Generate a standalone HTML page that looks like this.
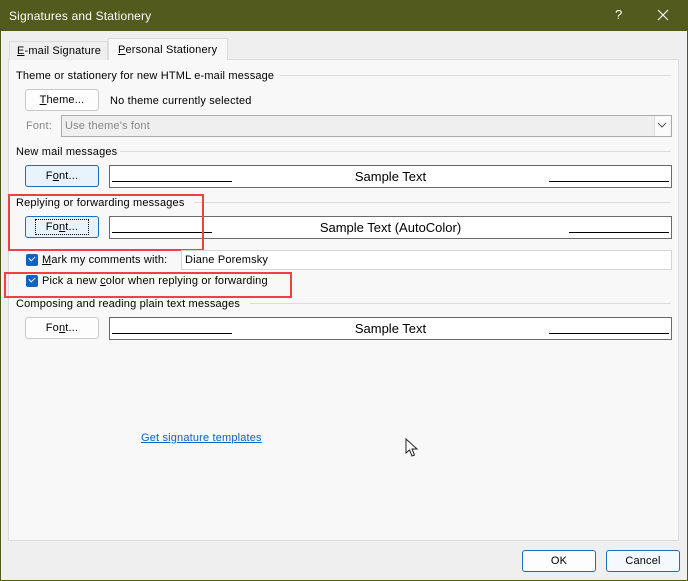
<!DOCTYPE html>
<html><head><meta charset="utf-8"><style>
*{box-sizing:border-box;margin:0;padding:0}
body{width:688px;height:581px;background:#efefef;font-family:"Liberation Sans",sans-serif;font-size:11px;color:#000;position:relative;overflow:hidden}
.a{position:absolute}
.t{position:absolute;white-space:nowrap;line-height:14px;letter-spacing:0.17px}
.btn{position:absolute;width:74px;height:22px;border:1px solid #c8c8c8;border-radius:3px;background:#fdfdfd;text-align:center;line-height:20px;font-size:11px;letter-spacing:0.17px}
.bl{border-color:#1a6fbf;background:#e8f2fb}
.samp{position:absolute;left:109px;width:563px;height:23px;background:#fff;border:1px solid #6a6a6a}
.samp .u{position:absolute;bottom:5px;height:1px;background:#000}
.samp span{position:absolute;left:0;right:0;text-align:center;top:3px;font-size:13px}
.hl{position:absolute;height:1px;background:#dcdcdc;right:17px}
.cb{position:absolute;width:12px;height:12px;background:#0f62c0;border-radius:2px}
.cb:after{content:"";position:absolute;left:3px;top:2px;width:5px;height:3px;border-left:1.3px solid #fff;border-bottom:1.3px solid #fff;transform:rotate(-45deg)}
.red{position:absolute;border:2px solid #ef4045}
</style></head><body>
<div class="a" style="left:0;top:0;width:688px;height:31px;background:#525a1e"></div>
<div class="t" style="left:9px;top:9px;color:#fff;font-size:12px">Signatures and Stationery</div>
<div class="t" style="left:615px;top:8px;color:#fff;font-size:13px">?</div>
<svg class="a" style="left:657px;top:9px" width="12" height="12"><path d="M1 1L11 11M11 1L1 11" stroke="#fff" stroke-width="1.2"/></svg>
<div class="a" style="left:0;top:31px;width:1px;height:550px;background:#525a1e"></div>
<div class="a" style="left:687px;top:31px;width:1px;height:550px;background:#525a1e"></div>
<div class="a" style="left:0;top:580px;width:688px;height:1px;background:#525a1e"></div>

<div class="a" style="left:8px;top:59px;width:671px;height:482px;background:#f8f8f8;border:1px solid #dcdcdc"></div>
<div class="a" style="left:9px;top:41px;width:99px;height:19px;border:1px solid #dcdcdc;border-bottom:none;background:#efefef"></div>
<div class="t" style="left:17px;top:44px"><u>E</u>-mail Signature</div>
<div class="a" style="left:108px;top:38px;width:120px;height:22px;border:1px solid #dcdcdc;border-bottom:none;background:#f8f8f8"></div>
<div class="t" style="left:118px;top:43px"><u>P</u>ersonal Stationery</div>

<div class="t" style="left:16px;top:69px">Theme or stationery for new HTML e-mail message</div>
<div class="hl" style="left:280px;top:75px"></div>
<div class="btn" style="left:25px;top:89px"><u>T</u>heme...</div>
<div class="t" style="left:110px;top:94px">No theme currently selected</div>
<div class="t" style="left:26px;top:119px;color:#888">Font:</div>
<div class="a" style="left:61px;top:115px;width:611px;height:22px;background:#efefef;border:1px solid #acacac"></div>
<div class="t" style="left:65px;top:119px;color:#888">Use theme's font</div>
<div class="a" style="left:654px;top:116px;width:16px;height:20px;background:#fbfbfb;border-left:1px solid #ddd"></div>
<svg class="a" style="left:657px;top:122px" width="10" height="6"><path d="M1 1L5 5L9 1" stroke="#555" fill="none"/></svg>

<div class="t" style="left:16px;top:145px">New mail messages</div>
<div class="hl" style="left:120px;top:151px"></div>
<div class="btn bl" style="left:25px;top:165px">F<u>o</u>nt...</div>
<div class="samp" style="top:165px"><div class="u" style="left:2px;width:120px"></div><div class="u" style="right:2px;width:120px"></div><span>Sample Text</span></div>

<div class="t" style="left:16px;top:196px">Replying or forwarding messages</div>
<div class="hl" style="left:194px;top:202px"></div>
<div class="btn bl" style="left:25px;top:216px"><span style="outline:1px dotted #000;padding:1px 10px">Fo<u>n</u>t...</span></div>
<div class="samp" style="top:216px"><div class="u" style="left:2px;width:100px"></div><div class="u" style="right:2px;width:100px"></div><span>Sample Text (AutoColor)</span></div>
<div class="red" style="left:8px;top:194px;width:196px;height:57px"></div>

<div class="cb" style="left:26px;top:254px"></div>
<div class="t" style="left:42px;top:253px"><u>M</u>ark my comments with:</div>
<div class="a" style="left:181px;top:250px;width:491px;height:20px;background:#fff;border:1px solid #d4d4d4"></div>
<div class="t" style="left:185px;top:253px">Diane Poremsky</div>
<div class="cb" style="left:26px;top:275px"></div>
<div class="t" style="left:42px;top:274px">Pick a new <u>c</u>olor when replying or forwarding</div>
<div class="red" style="left:4px;top:272px;width:288px;height:26px"></div>

<div class="t" style="left:16px;top:297px">Composing and reading plain text messages</div>
<div class="hl" style="left:250px;top:303px"></div>
<div class="btn" style="left:25px;top:317px">Fo<u>n</u>t...</div>
<div class="samp" style="top:317px"><div class="u" style="left:2px;width:120px"></div><div class="u" style="right:2px;width:120px"></div><span>Sample Text</span></div>

<div class="t" style="left:141px;top:431px;color:#0066cc;text-decoration:underline">Get signature templates</div>
<svg class="a" style="left:405px;top:438px" width="14" height="20"><path d="M1 1L1 15L4.5 12L7 18L9.5 17L7 11L12 11Z" fill="#fff" stroke="#222" stroke-width="1"/></svg>

<div class="btn" style="left:522px;top:550px;border-color:#1a6fbf">OK</div>
<div class="btn" style="left:606px;top:550px;border-color:#1a6fbf;background:#f4f9fd">Cancel</div>
</body></html>
